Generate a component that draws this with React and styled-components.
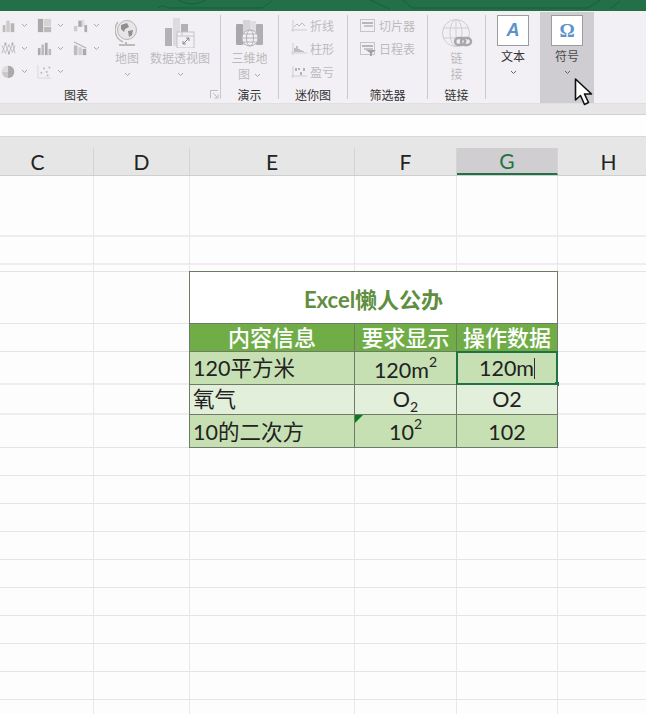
import styled, { createGlobalStyle } from "styled-components";

const GlobalStyle = createGlobalStyle`
  html, body {
    margin: 0;
    padding: 0;
    background: #fdfdfd;
  }
  * {
    box-sizing: border-box;
  }
`;

const FONT = `Lato, "Noto Sans CJK SC", sans-serif`;
const COLS = "94px 96px 165px 102px 101px 102px";
const DARK_LINE = "#6f7a68";

const Page = styled.div`
  position: relative;
  width: 646px;
  height: 714px;
  overflow: hidden;
  font-family: ${FONT};
  background: #fdfdfd;
`;

/* top green bar, only the bottom of the tabs shows */
const TabBar = styled.div`
  position: relative;
  display: flex;
  align-items: flex-end;
  height: 11px;
  padding: 0 0 9px 28px;
  overflow: hidden;
  background: #226f48;
`;

const Tab = styled.span`
  margin-left: ${(p) => p.$gap || 0}px;
  font-size: 12px;
  line-height: 16px;
  color: #fff;
  white-space: nowrap;
`;

const BarArt = styled.svg`
  position: absolute;
  left: 0;
  top: 0;
`;

const Ribbon = styled.div`
  display: flex;
  height: 92px;
  background: #f3f0f5;
`;

const Group = styled.div`
  position: relative;
  display: flex;
  flex-direction: column;
  align-items: ${(p) => (p.$stretch ? "stretch" : "center")};
  width: ${(p) => p.$w}px;
  height: 84px;
  margin: 4px 0;
  border-right: 1px solid #cbc9cd;
`;

const GroupBody = styled.div`
  display: flex;
  flex: 1;
`;

const GroupLabel = styled.div`
  width: ${(p) => (p.$w ? `${p.$w}px` : "auto")};
  margin-bottom: -5px;
  font-size: 12px;
  line-height: 17px;
  text-align: center;
  color: #333;
`;

const Launcher = styled.svg`
  position: absolute;
  right: 1px;
  bottom: 0;
`;

const IconGrid = styled.div`
  display: grid;
  grid-template-columns: repeat(3, 36px);
  grid-auto-rows: 21px;
  row-gap: 2px;
  width: 110px;
  padding-left: 1px;
`;

const IconCell = styled.div`
  display: flex;
  align-items: center;
  gap: 5px;
`;

const Chevron = styled.svg`
  display: block;
  flex: none;
`;

const LargeButton = styled.div`
  display: flex;
  flex-direction: column;
  align-items: center;
  width: ${(p) => p.$w}px;
  margin-left: ${(p) => p.$gap || 0}px;
  padding-top: 3px;
`;

const ButtonText = styled.div`
  display: flex;
  align-items: center;
  justify-content: center;
  gap: 4px;
  height: 16px;
  font-size: 12px;
  line-height: 16px;
  white-space: nowrap;
  color: #bcbabd;
`;

const IconSlot = styled.div`
  display: flex;
  justify-content: center;
  height: 33px;
`;

const ChevronRow = styled.div`
  display: flex;
  align-items: center;
  height: 14px;
`;

const CommandList = styled.div`
  display: flex;
  flex-direction: column;
  gap: 2px;
  padding-left: ${(p) => p.$left}px;
`;

const Command = styled.div`
  display: flex;
  align-items: center;
  gap: 3px;
  height: 21px;
  font-size: 12px;
  color: #bcbabd;
`;

const InsertSlot = styled.div`
  display: flex;
  flex-direction: column;
  align-items: center;
  width: ${(p) => p.$w}px;
  height: ${(p) => (p.$active ? "91px" : "84px")};
  margin-top: ${(p) => (p.$active ? "1px" : "4px")};
  padding-top: ${(p) => (p.$active ? "3px" : "0")};
  background: ${(p) => (p.$active ? "#cfcdd1" : "transparent")};
`;

const GlyphBox = styled.div`
  display: flex;
  align-items: center;
  justify-content: center;
  width: 32px;
  height: 31px;
  background: #fff;
  border: 1px solid #9c9b9e;
  font-family: ${(p) => (p.$italic ? `"Liberation Sans"` : `"Liberation Serif"`)}, serif;
  font-size: ${(p) => (p.$italic ? 18 : 19)}px;
  font-weight: 700;
  font-style: ${(p) => (p.$italic ? "italic" : "normal")};
  color: #5b93c9;
`;

const InsertText = styled.div`
  margin-top: 3px;
  font-size: 12px;
  line-height: 16px;
  color: ${(p) => (p.$muted ? "#4a4a4a" : "#333")};
`;

const Gap = styled.div`
  height: 11px;
  background: #e6e6e6;
  border-top: 1px solid #e0dfe2;
`;

const FormulaBar = styled.div`
  height: 23px;
  background: #fefefe;
  border-top: 1px solid #d2d2d2;
  border-bottom: 1px solid #d8d8d8;
`;

const ColumnHeaders = styled.div`
  display: grid;
  grid-template-columns: ${COLS};
  height: 39px;
  padding-top: 11px;
  background: #e6e6e6;
  border-bottom: 1px solid #cfcfcf;
`;

const ColumnHead = styled.div`
  display: flex;
  align-items: center;
  justify-content: center;
  padding-right: ${(p) => p.$pad || 0}px;
  font-size: 21px;
  color: ${(p) => (p.$active ? "#217346" : "#222")};
  background: ${(p) => (p.$active ? "#d0ced1" : "transparent")};
  border-right: 1px solid #d4d4d4;
  border-bottom: ${(p) => (p.$active ? "2px solid #217346" : "0")};
`;

const Row = styled.div`
  display: grid;
  grid-template-columns: ${COLS};
  height: ${(p) => p.$h}px;
`;

const Cell = styled.div`
  border-right: 1px solid #e8e8e8;
  border-bottom: ${(p) => (p.$soft ? "2px solid #f1ecf1" : "1px solid #e4e4e4")};
`;

const TitleCell = styled.div`
  grid-column: span 3;
  display: flex;
  align-items: center;
  justify-content: center;
  font-size: 22px;
  font-weight: 700;
  color: #5f8f3e;
  background: #fff;
  border-right: 1px solid ${DARK_LINE};
  border-bottom: 1px solid ${DARK_LINE};
  box-shadow: -1px 0 0 ${DARK_LINE}, 0 -1px 0 ${DARK_LINE}, -1px -1px 0 ${DARK_LINE};
`;

const TableCell = styled.div`
  position: relative;
  display: flex;
  align-items: center;
  justify-content: ${(p) => (p.$left ? "flex-start" : "center")};
  padding: ${(p) => p.$drop || 0}px 0 0 ${(p) => (p.$left ? "3px" : "0")};
  font-size: ${(p) => (p.$head ? 22 : 21.5)}px;
  font-weight: ${(p) => (p.$head ? 500 : 400)};
  line-height: 1;
  color: ${(p) => (p.$head ? "#fff" : "#222")};
  background: ${(p) => p.$fill};
  border-right: 1px solid ${DARK_LINE};
  border-bottom: 1px solid ${DARK_LINE};
  box-shadow: ${(p) => (p.$edge ? `-1px 0 0 ${DARK_LINE}` : "none")};
`;

const Sup = styled.sup`
  font-size: 14px;
  line-height: 0;
  vertical-align: 11px;
`;

const Sub = styled.sub`
  font-size: 14px;
  line-height: 0;
`;

const Selection = styled.div`
  position: absolute;
  inset: -1px -1px -1px -1px;
  border: 2px solid #217346;
  &::after {
    content: "";
    position: absolute;
    right: -3px;
    bottom: -3px;
    width: 4px;
    height: 4px;
    background: #217346;
  }
`;

const Caret = styled.span`
  display: inline-block;
  width: 1px;
  height: 21px;
  background: #333;
`;

const ErrorMark = styled.div`
  position: absolute;
  left: 0;
  top: 0;
  width: 0;
  height: 0;
  border-top: 8px solid #0b7a1e;
  border-right: 8px solid transparent;
`;

const MouseArrow = styled.svg`
  position: absolute;
  left: 574px;
  top: 78px;
`;

const Chev = ({ dark }) => (
  <Chevron width="7" height="5" viewBox="0 0 7 5">
    <path d="M1 1l2.5 2.5L6 1" fill="none" stroke={dark ? "#666" : "#a9a7aa"} strokeWidth="1" />
  </Chevron>
);

const Small = ({ children }) => (
  <svg width="15" height="15" viewBox="0 0 17 17">
    {children}
  </svg>
);

// the nine chart type icons on the left of the ribbon
const chartIcons = [
  <>
    <rect x="2" y="8" width="3" height="8" fill="#bbb" />
    <rect x="6" y="3" width="4" height="13" fill="#ccc" />
    <rect x="11" y="6" width="4" height="10" fill="#b4b4b4" />
  </>,
  <>
    <rect x="1" y="1" width="6" height="15" fill="#aaa" />
    <rect x="8" y="1" width="8" height="8" fill="#d4d4d4" />
    <rect x="8" y="10" width="8" height="6" fill="#bbb" />
  </>,
  <>
    <rect x="1" y="9" width="4" height="6" fill="#ccc" />
    <rect x="6" y="3" width="4" height="7" fill="#aaa" />
    <rect x="10" y="2" width="3" height="8" fill="#ddd" />
    <rect x="13" y="8" width="3" height="8" fill="#aaa" />
  </>,
  <>
    <path d="M1 14L5 3l4 11 4-11 3 11M1 5l4 9 4-10 4 9 3-8" fill="none" stroke="#bbb" strokeWidth="1" />
    <circle cx="5" cy="3" r="1.2" fill="#aaa" />
    <circle cx="9" cy="14" r="1.2" fill="#aaa" />
    <circle cx="13" cy="3" r="1.2" fill="#aaa" />
  </>,
  <>
    <rect x="1" y="8" width="3" height="8" fill="#aaa" />
    <rect x="5" y="4" width="3" height="12" fill="#bbb" />
    <rect x="9" y="2" width="3" height="14" fill="#aaa" />
    <rect x="13" y="9" width="3" height="7" fill="#bbb" />
  </>,
  <>
    <rect x="1" y="5" width="4" height="11" fill="#bbb" />
    <rect x="6" y="7" width="4" height="9" fill="#d0d0d0" />
    <rect x="11" y="9" width="4" height="7" fill="#aaa" />
    <path d="M1 1l14 7" stroke="#999" strokeWidth="1" />
  </>,
  <>
    <circle cx="8" cy="9" r="7" fill="#c9c9c9" />
    <path d="M8 9V2a7 7 0 0 1 0 14z" fill="#aaa" />
    <path d="M8 9L1 9a7 7 0 0 1 7-7z" fill="#ddd" />
  </>,
  <>
    <path d="M1 1v15h15" fill="none" stroke="#d4d4d4" />
    <g fill="#bbb">
      <rect x="4" y="9" width="2" height="2" />
      <rect x="7" y="4" width="2" height="2" />
      <rect x="10" y="8" width="2" height="2" />
      <rect x="13" y="3" width="2" height="2" />
      <rect x="11" y="12" width="2" height="2" />
    </g>
  </>,
];

const gridGlobe = (
  <>
    <circle cx="15" cy="15" r="13.5" fill="none" stroke="#cfcdd0" />
    <ellipse cx="15" cy="15" rx="6" ry="13.5" fill="none" stroke="#cfcdd0" />
    <path d="M2 10h26M2 20h26M15 1v28" stroke="#cfcdd0" />
  </>
);

const MapIcon = () => (
  <svg width="24" height="29" viewBox="0 0 24 29">
    <circle cx="12" cy="12" r="9.5" fill="#e6e6e6" stroke="#b5b5b5" />
    <path d="M6 7l6-2 2 4-4 2-1 3-3-3zM13 13l5-1-1 5-3 2z" fill="#8f8f8f" />
    <path d="M3 4A13 13 0 0 0 8 24" fill="none" stroke="#bbb" strokeWidth="1.5" />
    <path d="M11 24v2M4 27h16" stroke="#bbb" strokeWidth="2" />
  </svg>
);

const PivotIcon = () => (
  <svg width="30" height="30" viewBox="0 0 30 30">
    <rect x="0" y="10" width="7" height="18" fill="#b3b1b4" />
    <rect x="8" y="0" width="7" height="28" fill="#dedbe0" />
    <rect x="16" y="6" width="7" height="12" fill="#b3b1b4" />
    <rect x="12" y="14" width="17" height="16" fill="#f3f0f5" stroke="#c4c2c5" />
    <path d="M12 18h17M17 14v4" stroke="#c4c2c5" />
    <path d="M18 26l6-6M21 20h3v3M18 23v3h3" fill="none" stroke="#888" />
  </svg>
);

const MapsIcon3D = () => (
  <svg width="30" height="30" viewBox="0 0 30 30">
    <rect x="1" y="6" width="7" height="21" rx="1" fill="#a9a7aa" />
    <rect x="8" y="2" width="7" height="25" fill="#d6d4d7" />
    <rect x="15" y="3" width="6" height="24" fill="#e0dee1" />
    <rect x="21" y="6" width="7" height="21" rx="1" fill="#b0aeb1" />
    <circle cx="15" cy="20" r="8" fill="#f3f0f5" stroke="#b5b3b6" />
    <ellipse cx="15" cy="20" rx="3.5" ry="8" fill="none" stroke="#b5b3b6" />
    <path d="M7 20h16M8.5 16h13M8.5 24h13" stroke="#b5b3b6" />
  </svg>
);

const LinkIcon = () => (
  <svg width="32" height="32" viewBox="0 0 32 32">
    {gridGlobe}
    <g fill="none" stroke="#a9a7aa" strokeWidth="2.5">
      <rect x="14" y="20" width="10" height="7" rx="3.5" />
      <rect x="20" y="20" width="10" height="7" rx="3.5" />
    </g>
  </svg>
);

const Sparkline = ({ children }) => (
  <svg width="16" height="14" viewBox="0 0 16 14">
    <path d="M2 1v12M0 11h16" stroke="#cfcdd0" strokeWidth="1" />
    {children}
  </svg>
);

const SliceIcon = ({ funnel }) => (
  <svg width="16" height="14" viewBox="0 0 16 14">
    <rect x="0.5" y="0.5" width="14" height="12" fill="#f3f0f5" stroke="#c6c4c7" />
    <rect x="2" y="3" width="11" height="2" fill="#b8b6b9" />
    <rect x="4" y="6" width="9" height="2" fill="#c6c4c7" />
    {funnel && <path d="M6 8h10l-4 3v3h-2v-3z" fill="#a4a2a5" />}
  </svg>
);

export default function App() {
  const blank = (count = 6, soft) =>
    Array.from({ length: count }, (_, i) => <Cell key={i} $soft={soft} />);

  const lowerRows = Array.from({ length: 10 }, (_, i) => i);

  return (
    <Page>
      <GlobalStyle />
      <TabBar>
        <Tab>审阅</Tab>
        <Tab $gap={24}>视图</Tab>
        <Tab $gap={28}>帮助</Tab>
        <Tab $gap={146}>操作说明搜索内容</Tab>
        <Tab $gap={232}>共享</Tab>
        <BarArt width="646" height="11" viewBox="0 0 646 11">
          <path
            d="M158 8q5-4 10 0h94l10-7M178 0q14 8 28 0M370 0l20 9M403 0l9 8h176l12-8M610 9l10-8"
            fill="none"
            stroke="#1b5e3b"
            strokeWidth="1"
          />
        </BarArt>
      </TabBar>

      <Ribbon>
        <Group $w={221} $stretch>
          <GroupBody>
            <IconGrid>
              {chartIcons.map((icon, i) => (
                <IconCell key={i}>
                  <Small>{icon}</Small>
                  <Chev />
                </IconCell>
              ))}
            </IconGrid>
            <LargeButton $w={34}>
              <IconSlot>
                <MapIcon />
              </IconSlot>
              <ButtonText>地图</ButtonText>
              <ChevronRow>
                <Chev />
              </ChevronRow>
            </LargeButton>
            <LargeButton $w={64} $gap={4}>
              <IconSlot>
                <PivotIcon />
              </IconSlot>
              <ButtonText>数据透视图</ButtonText>
              <ChevronRow>
                <Chev />
              </ChevronRow>
            </LargeButton>
          </GroupBody>
          <GroupLabel $w={152}>图表</GroupLabel>
          <Launcher width="9" height="9" viewBox="0 0 9 9">
            <path d="M.5 8V.5H8M3 3l5 5M8 4.5V8H4.5" fill="none" stroke="#bdbbbe" />
          </Launcher>
        </Group>

        <Group $w={58}>
          <GroupBody>
            <LargeButton $w={50}>
              <IconSlot>
                <MapsIcon3D />
              </IconSlot>
              <ButtonText>三维地</ButtonText>
              <ButtonText>
                图 <Chev />
              </ButtonText>
            </LargeButton>
          </GroupBody>
          <GroupLabel>演示</GroupLabel>
        </Group>

        <Group $w={69} $stretch>
          <GroupBody>
            <CommandList $left={12}>
              <Command>
                <Sparkline>
                  <path d="M3 8l3-3 2 2 3-3 3 3" fill="none" stroke="#bdbbbe" />
                </Sparkline>
                折线
              </Command>
              <Command>
                <Sparkline>
                  <path d="M4 10V6M6 10V4M8 10V7M10 10V8M12 10V9" stroke="#9f9da0" strokeWidth="1.2" />
                </Sparkline>
                柱形
              </Command>
              <Command>
                <Sparkline>
                  <path d="M5 3v3M8 3v2M10 7v3M13 3v3" stroke="#9f9da0" strokeWidth="1.5" />
                </Sparkline>
                盈亏
              </Command>
            </CommandList>
          </GroupBody>
          <GroupLabel>迷你图</GroupLabel>
        </Group>

        <Group $w={80} $stretch>
          <GroupBody>
            <CommandList $left={12}>
              <Command>
                <SliceIcon />
                切片器
              </Command>
              <Command>
                <SliceIcon funnel />
                日程表
              </Command>
            </CommandList>
          </GroupBody>
          <GroupLabel>筛选器</GroupLabel>
        </Group>

        <Group $w={58}>
          <GroupBody>
            <LargeButton $w={40}>
              <IconSlot>
                <LinkIcon />
              </IconSlot>
              <ButtonText>链</ButtonText>
              <ButtonText>接</ButtonText>
            </LargeButton>
          </GroupBody>
          <GroupLabel>链接</GroupLabel>
        </Group>

        <InsertSlot $w={54}>
          <GlyphBox $italic>A</GlyphBox>
          <InsertText>文本</InsertText>
          <ChevronRow>
            <Chev dark />
          </ChevronRow>
        </InsertSlot>
        <InsertSlot $w={54} $active>
          <GlyphBox>Ω</GlyphBox>
          <InsertText $muted>符号</InsertText>
          <ChevronRow>
            <Chev dark />
          </ChevronRow>
        </InsertSlot>
      </Ribbon>

      <Gap />
      <FormulaBar />

      <ColumnHeaders>
        <ColumnHead $pad={18}>C</ColumnHead>
        <ColumnHead>D</ColumnHead>
        <ColumnHead>E</ColumnHead>
        <ColumnHead>F</ColumnHead>
        <ColumnHead $active>G</ColumnHead>
        <ColumnHead>H</ColumnHead>
      </ColumnHeaders>

      <Row $h={61}>{blank(6, true)}</Row>
      <Row $h={28}>{blank(6, true)}</Row>
      <Row $h={7}>{blank()}</Row>

      <Row $h={52}>
        {blank(2)}
        <TitleCell>Excel懒人公办</TitleCell>
        <Cell />
      </Row>
      <Row $h={28}>
        {blank(2)}
        <TableCell $head $edge $drop={1} $fill="#70ad47">内容信息</TableCell>
        <TableCell $head $drop={1} $fill="#70ad47">要求显示</TableCell>
        <TableCell $head $drop={1} $fill="#70ad47">操作数据</TableCell>
        <Cell />
      </Row>
      <Row $h={33}>
        {blank(2, true)}
        <TableCell $left $edge $drop={1} $fill="#c6e0b4">120平方米</TableCell>
        <TableCell $fill="#c6e0b4" $drop={5}>
          <span>
            120m<Sup>2</Sup>
          </span>
        </TableCell>
        <TableCell $fill="#c6e0b4" $drop={1}>
          120m
          <Caret />
          <Selection />
        </TableCell>
        <Cell $soft />
      </Row>
      <Row $h={30}>
        {blank(2, true)}
        <TableCell $left $edge $fill="#e2efda">氧气</TableCell>
        <TableCell $fill="#e2efda">
          <span>
            O<Sub>2</Sub>
          </span>
        </TableCell>
        <TableCell $fill="#e2efda">O2</TableCell>
        <Cell $soft />
      </Row>
      <Row $h={33}>
        {blank(2)}
        <TableCell $left $edge $fill="#c6e0b4" $drop={4}>10的二次方</TableCell>
        <TableCell $fill="#c6e0b4" $drop={4}>
          <ErrorMark />
          <span>
            10<Sup>2</Sup>
          </span>
        </TableCell>
        <TableCell $fill="#c6e0b4" $drop={4}>102</TableCell>
        <Cell />
      </Row>

      {lowerRows.map((i) => (
        <Row key={i} $h={28}>
          {blank()}
        </Row>
      ))}

      <MouseArrow width="20" height="28" viewBox="0 0 20 28">
        <path d="M1.5 1v21l5-4.5 4 9 4-2-4-8.5h7z" fill="#fff" stroke="#111" strokeWidth="1.6" strokeLinejoin="round" />
      </MouseArrow>
    </Page>
  );
}
